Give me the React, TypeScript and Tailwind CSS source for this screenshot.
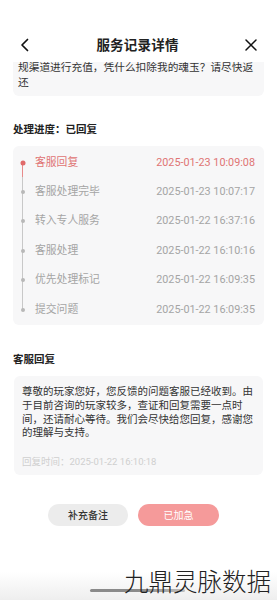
import React from 'react';

const steps = [
  { label: '客服回复', time: '2025-01-23 10:09:08', active: true },
  { label: '客服处理完毕', time: '2025-01-23 10:07:17' },
  { label: '转入专人服务', time: '2025-01-22 16:37:16' },
  { label: '客服处理', time: '2025-01-22 16:10:16' },
  { label: '优先处理标记', time: '2025-01-22 16:09:35' },
  { label: '提交问题', time: '2025-01-22 16:09:35' },
];

export default function App() {
  return (
    <div
      className="relative flex h-[600px] w-[277px] flex-col overflow-hidden bg-white text-[#222]"
      style={{ fontFamily: 'Roboto, "Noto Sans CJK SC", sans-serif' }}
    >
      {/* Header */}
      <div className="relative z-10 flex h-[62px] items-end bg-white px-[19px] pb-[4px]">
        <div className="flex h-[26px] w-full items-center justify-between">
          <svg width="12" height="14" viewBox="0 0 12 14" fill="none">
            <path d="M8.5 1.5 L3 7 L8.5 12.5" stroke="#111" strokeWidth="1.7" strokeLinecap="round" strokeLinejoin="round" />
          </svg>
          <h1 className="text-[13.5px] font-bold tracking-[0.2px]">服务记录详情</h1>
          <svg width="14" height="14" viewBox="0 0 14 14" fill="none">
            <path d="M2 2 L12 12 M12 2 L2 12" stroke="#111" strokeWidth="1.5" strokeLinecap="round" />
          </svg>
        </div>
      </div>

      {/* Question card (scrolled) */}
      <div className="-mt-[2px] mx-[13px] rounded-b-[6px] bg-[#f7f7f8] px-[5px] pb-[6px] text-[10.7px] leading-[15px] text-[#333]">
        规渠道进行充值，凭什么扣除我的魂玉？请尽快返还
      </div>

      {/* Progress */}
      <div className="mx-[13px] mt-[27px] text-[10.5px] font-bold leading-[14px]">处理进度：已回复</div>
      <div className="mx-[13px] mt-[9px] rounded-[6px] bg-[#f7f7f8] pt-[2px] pb-[1px]">
        {steps.map((s, i) => (
          <div key={i} className="relative flex h-[29.4px] items-center pl-[22px] pr-[9px] text-[10.8px]">
            <div className="absolute left-[9px] top-0 flex h-full w-[1px] flex-col">
              <div className={`h-1/2 w-full ${i === 0 ? '' : 'bg-[#c8c8c8]'}`} />
              <div className={`h-1/2 w-full ${i === 0 ? 'bg-[#e88a8a]' : i === steps.length - 1 ? '' : 'bg-[#c8c8c8]'}`} />
            </div>
            <span
              className={`absolute top-1/2 -translate-x-1/2 -translate-y-1/2 rounded-full ${
                s.active ? 'left-[9.5px] h-[5px] w-[5px] bg-[#e06a6a]' : 'left-[9.5px] h-[4px] w-[4px] bg-[#b8b8b8]'
              }`}
            />
            <span className={s.active ? 'text-[#e07474]' : 'text-[#a5a5a5]'}>{s.label}</span>
            <span className={`ml-auto ${s.active ? 'text-[#e07474]' : 'text-[#a5a5a5]'}`}>{s.time}</span>
          </div>
        ))}
      </div>

      {/* Reply */}
      <div className="mx-[13px] mt-[28px] text-[10.5px] font-bold leading-[14px]">客服回复</div>
      <div className="mx-[14px] mt-[9px] rounded-[6px] bg-[#f7f7f8] pl-[8px] pr-[4px] pt-[9px] pb-[7px]">
        <p className="text-[10.5px] leading-[13.7px] text-[#333]">
          尊敬的玩家您好，您反馈的问题客服已经收到。由于目前咨询的玩家较多，查证和回复需要一点时间，还请耐心等待。我们会尽快给您回复，感谢您的理解与支持。
        </p>
        <p className="mt-[16px] text-[9.5px] leading-[12px] text-[#cfcfcf]">回复时间：2025-01-22 16:10:18</p>
      </div>

      {/* Buttons */}
      <div className="mt-[29px] flex gap-[10px] pl-[48px]">
        <button className="h-[22px] w-[80px] rounded-full bg-[#ececec] text-[10px] font-medium text-[#333]">补充备注</button>
        <button className="h-[22px] w-[81px] rounded-full bg-[#f59a9a] text-[10px] text-white">已加急</button>
      </div>

      {/* Bottom bar */}
      <div className="mt-auto h-[28px] bg-gradient-to-b from-white to-[#eeeeee]" />
      <div className="absolute bottom-[8px] left-[90px] h-[3px] w-[95px] rounded-full bg-gradient-to-r from-[#8a8a8a] via-[#8a8a8a] to-[#c0c0c0]" />
      <div
        className="absolute bottom-[5px] right-[6px] text-[24.5px] font-light leading-[28px] text-[#222]"
        style={{ fontFamily: '"Noto Sans CJK SC", sans-serif' }}
      >
        九鼎灵脉数据
      </div>
    </div>
  );
}
